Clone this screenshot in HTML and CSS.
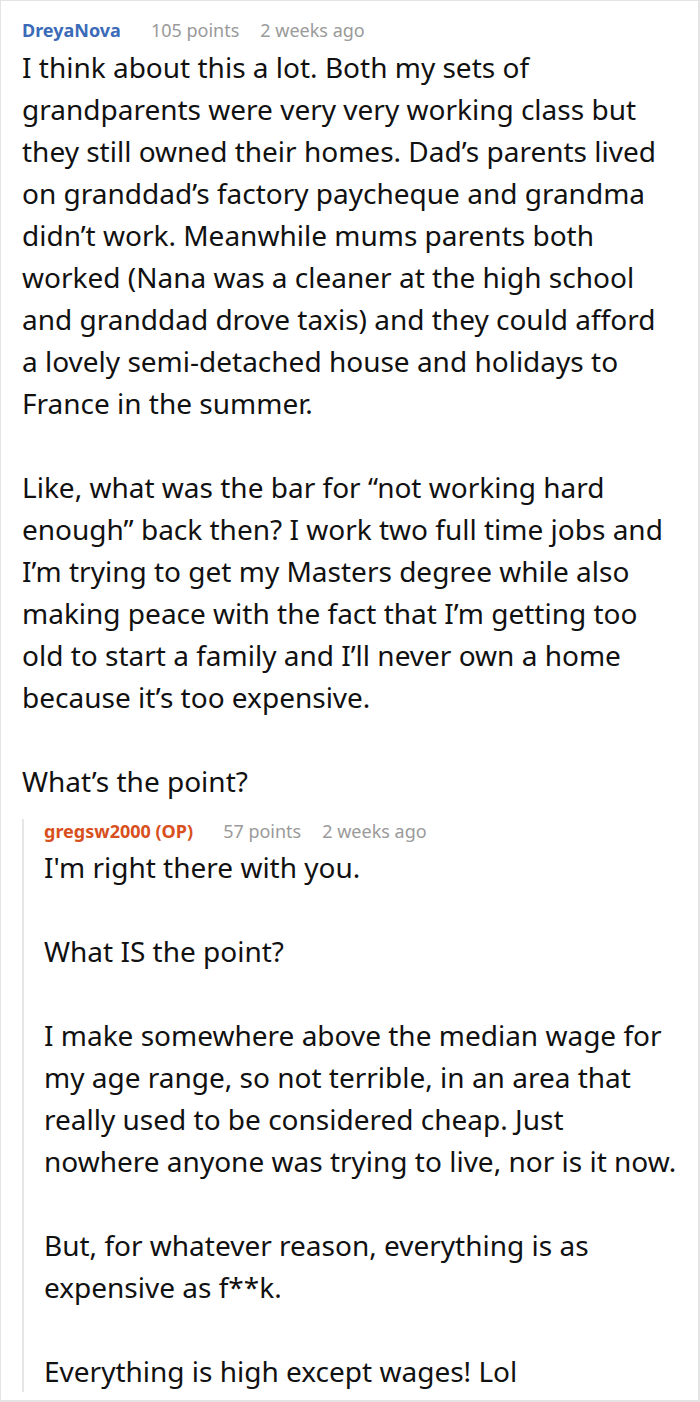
FILE: index.html
```html
<!DOCTYPE html>
<html>
<head>
<meta charset="utf-8">
<link rel="stylesheet" href="styles.css">
</head>
<body>
<div class="frame">
  <div class="comment">
    <div class="meta">
      <span class="user user-blue">DreyaNova</span>
      <span class="points">105 points</span>
      <span class="time">2 weeks ago</span>
    </div>
    <div class="body">
      <p>I think about this a lot. Both my sets of grandparents were very very working class but they still owned their homes. Dad’s parents lived on granddad’s factory paycheque and grandma didn’t work. Meanwhile mums parents both worked (Nana was a cleaner at the high school and granddad drove taxis) and they could afford a lovely semi-detached house and holidays to France in the summer.</p>
      <p>Like, what was the bar for “not working hard enough” back then? I work two full time jobs and I’m trying to get my Masters degree while also making peace with the fact that I’m getting too old to start a family and I’ll never own a home because it’s too expensive.</p>
      <p>What’s the point?</p>
    </div>
    <div class="reply">
      <div class="meta">
        <span class="user user-orange">gregsw2000 (OP)</span>
        <span class="points">57 points</span>
        <span class="time">2 weeks ago</span>
      </div>
      <div class="body">
        <p>I'm right there with you.</p>
        <p>What IS the point?</p>
        <p>I make somewhere above the median wage for my age range, so not terrible, in an area that really used to be considered cheap. Just nowhere anyone was trying to live, nor is it now.</p>
        <p>But, for whatever reason, everything is as expensive as f**k.</p>
        <p>Everything is high except wages! Lol</p>
      </div>
    </div>
  </div>
</div>
</body>
</html>
```

FILE: styles.css
```css
html, body {
  margin: 0;
  padding: 0;
  background: #ffffff;
}
.frame {
  box-sizing: border-box;
  width: 700px;
  height: 1402px;
  border: 1px solid #e4e4e4;
  border-right-width: 2px;
  border-bottom-width: 2px;
  overflow: hidden;
  background: #ffffff;
}
.comment {
  padding: 17px 0 0 21px;
  font-family: "Noto Sans", sans-serif;
}
.meta {
  font-size: 18px;
  line-height: 24px;
  height: 24px;
  display: flex;
  align-items: center;
  white-space: nowrap;
}
.user {
  font-weight: 700;
  margin-right: 30px;
}
.user-blue { color: #3b6bb8; }
.user-orange { color: #d8501d; }
.points {
  color: #9a9a9a;
  margin-right: 21px;
}
.time { color: #9a9a9a; }
.body {
  margin-top: 4px;
  font-size: 28px;
  line-height: 42px;
  color: #111111;
  padding-right: 20px;
}
.body p {
  margin: 0 0 42px 0;
}
.body p:last-child {
  margin-bottom: 0;
}
.reply {
  margin-top: 17px;
  border-left: 2px solid #e6e6e6;
  padding-left: 20px;
}
.reply .body {
  margin-top: 3px;
}
.reply .body p:last-child {
  margin-bottom: -11px;
}
```
